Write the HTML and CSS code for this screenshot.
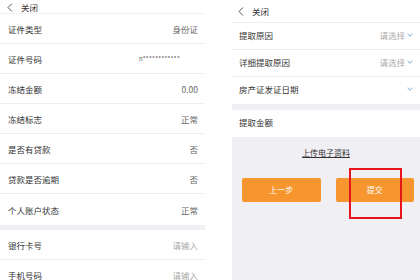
FILE: index.html
```html
<!DOCTYPE html>
<html lang="zh-CN">
<head>
<meta charset="UTF-8">
<title>公积金提取</title>
<link rel="stylesheet" href="styles.css">
</head>
<body>

<div class="page">
    <!-- left screen: account info -->
    <div class="screen left">
        <div class="topbar">
            <svg class="back" width="6" height="9" viewBox="0 0 6 9"><path d="M5 0.5 L1 4.5 L5 8.5" fill="none" stroke="#555" stroke-width="1"/></svg>
            <span>关闭</span>
        </div>
        <div class="row"><span class="label">证件类型</span><span class="value">身份证</span></div>
        <div class="row"><span class="label">证件号码</span><span class="value id">n************</span></div>
        <div class="row"><span class="label">冻结金额</span><span class="value">0.00</span></div>
        <div class="row"><span class="label">冻结标志</span><span class="value">正常</span></div>
        <div class="row"><span class="label">是否有贷款</span><span class="value">否</span></div>
        <div class="row"><span class="label">贷款是否逾期</span><span class="value">否</span></div>
        <div class="row tall"><span class="label">个人账户状态</span><span class="value">正常</span></div>
        <div class="gap"></div>
        <div class="row"><span class="label">银行卡号</span><span class="value hint">请输入</span></div>
        <div class="row"><span class="label">手机号码</span><span class="value hint">请输入</span></div>
    </div>

    <!-- right screen: withdraw form -->
    <div class="screen right">
        <div class="topbar">
            <svg class="back" width="6" height="9" viewBox="0 0 6 9"><path d="M5 0.5 L1 4.5 L5 8.5" fill="none" stroke="#555" stroke-width="1"/></svg>
            <span>关闭</span>
        </div>
        <div class="row"><span class="label">提取原因</span><span class="value hint">请选择<i class="down"></i></span></div>
        <div class="row"><span class="label">详细提取原因</span><span class="value hint">请选择<i class="down"></i></span></div>
        <div class="row last"><span class="label">房产证发证日期</span><span class="value hint"><i class="down"></i></span></div>
        <div class="gap"></div>
        <div class="row last"><span class="label">提取金额</span></div>
        <div class="bottom">
            <a class="upload">上传电子资料</a>
            <div class="buttons">
                <div class="btn">上一步</div>
                <div class="btn">提交</div>
            </div>
            <div class="mark"></div>
        </div>
    </div>
</div>

</body>
</html>
```

FILE: styles.css
```css
body {
    margin: 0;
    padding: 0;
    background-color: #fff;
    font-family: "Noto Sans CJK SC", "Liberation Sans", sans-serif;
    font-size: 8.5px;
    color: #333;
}

.page {
    display: flex;
    width: 420px;
    height: 280px;
    overflow: hidden;
}

.screen {
    display: flex;
    flex-direction: column;
}

.left {
    width: 205px;
    margin-right: 27px;
}

.right {
    flex: 1;
    background-color: #efeff4;
    position: relative;
}

/* top bar with back arrow */
.topbar {
    display: flex;
    align-items: center;
    gap: 8px;
    background-color: #fff;
    color: #333;
    font-size: 8.5px;
    flex-shrink: 0;
}

.left .topbar {
    height: 12px;
    padding: 1px 0 0 7px;
    border-bottom: 1px solid #f2f2f2;
}

.right .topbar {
    height: 22px;
    padding: 0 0 0 6px;
    border-bottom: 1px solid #eee;
}

/* list rows */
.row {
    display: flex;
    justify-content: space-between;
    align-items: center;
    height: 29px;
    background-color: #fff;
    border-bottom: 1px solid #eee;
    flex-shrink: 0;
}

.left .row {
    padding: 0 7px 0 8px;
}

.left .row.tall {
    height: 31px;
    border-bottom: none;
}

.right .row {
    height: 23px;
    padding: 0 7px 3px 7px;
}

.right .row.last {
    height: 24px;
    border-bottom: none;
}

.label {
    color: #333;
}

.value {
    color: #666;
    display: flex;
    align-items: center;
}

.value.id {
    font-size: 6px;
    letter-spacing: 0.3px;
    margin-right: 18px;
    color: #555;
}

.hint {
    color: #aaa;
}

.down {
    display: inline-block;
    width: 3px;
    height: 3px;
    border-right: 1px solid #9cc3e0;
    border-bottom: 1px solid #9cc3e0;
    transform: rotate(45deg);
    margin: 0 1px 2px 3px;
}

.gap {
    height: 5px;
    background-color: #efeff4;
    flex-shrink: 0;
}

.right .gap {
    height: 6px;
}

/* grey area with upload link and buttons */
.bottom {
    flex: 1;
    display: flex;
    flex-direction: column;
    align-items: stretch;
    padding-top: 10px;
}

.upload {
    align-self: center;
    color: #333;
    text-decoration: underline;
    font-size: 8px;
}

.buttons {
    display: flex;
    gap: 15px;
    padding: 0 6px 0 10px;
    margin-top: 20px;
}

.btn {
    flex: 1;
    height: 24px;
    line-height: 24px;
    text-align: center;
    background-color: #f7962e;
    color: #fff;
    border-radius: 2px;
    font-size: 8px;
}

/* red highlight box drawn over the submit button */
.mark {
    position: absolute;
    left: 117px;
    top: 168px;
    width: 49px;
    height: 47px;
    border: 2px solid #e8141c;
}
```
